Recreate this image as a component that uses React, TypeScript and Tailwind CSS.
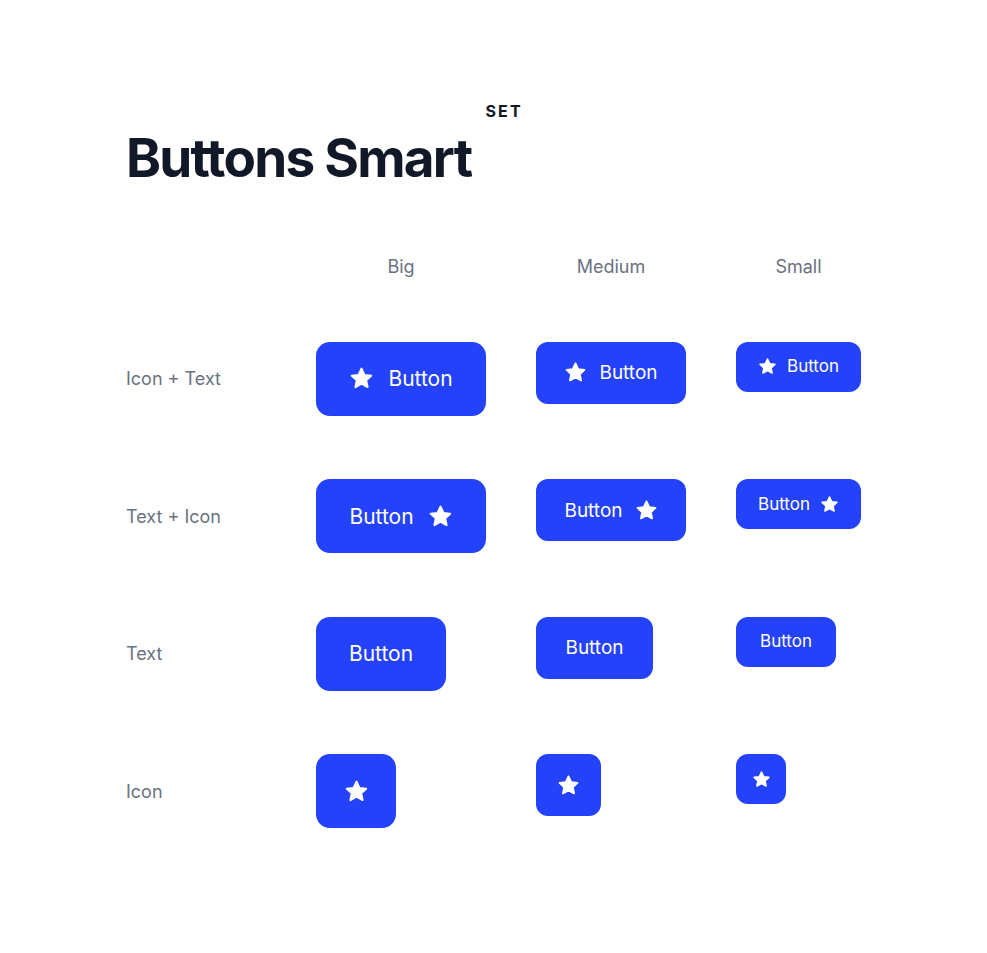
const StarIcon = ({ size }: { size: number }) => (
  <svg
    width={size}
    height={size}
    viewBox="0 0 24 24"
    fill="currentColor"
    stroke="currentColor"
    strokeWidth={2}
    strokeLinejoin="round"
    aria-hidden="true"
  >
    <path d="M12 2.6l2.8 6 6.5.7-4.85 4.45 1.35 6.45L12 17l-5.8 3.2 1.35-6.45L2.7 9.3l6.5-.7z" />
  </svg>
);

type Size = "big" | "medium" | "small";
type Kind = "icon-text" | "text-icon" | "text" | "icon";

const sizes = {
  big: {
    box: "h-[74px] rounded-[14px] text-[21px] gap-[14px]",
    star: 25,
    widths: {
      "icon-text": "w-[170px]",
      "text-icon": "w-[170px]",
      text: "w-[130px]",
      icon: "w-[80px]",
    },
  },
  medium: {
    box: "h-[62px] rounded-[12px] text-[19px] gap-[12px]",
    star: 23,
    widths: {
      "icon-text": "w-[150px]",
      "text-icon": "w-[150px]",
      text: "w-[117px]",
      icon: "w-[65px]",
    },
  },
  small: {
    box: "h-[50px] rounded-[12px] text-[17px] gap-[10px]",
    star: 19,
    widths: {
      "icon-text": "w-[125px]",
      "text-icon": "w-[125px]",
      text: "w-[100px]",
      icon: "w-[50px]",
    },
  },
};

const SmartButton = ({ size, kind }: { size: Size; kind: Kind }) => {
  const s = sizes[size];
  return (
    <button
      className={`${s.box} ${s.widths[kind]} flex items-center justify-center bg-[#2342F9] text-white font-normal leading-none`}
    >
      {kind === "icon-text" && <StarIcon size={s.star} />}
      {kind !== "icon" && <span>Button</span>}
      {(kind === "text-icon" || kind === "icon") && <StarIcon size={s.star} />}
    </button>
  );
};

const rows: { label: string; kind: Kind }[] = [
  { label: "Icon + Text", kind: "icon-text" },
  { label: "Text + Icon", kind: "text-icon" },
  { label: "Text", kind: "text" },
  { label: "Icon", kind: "icon" },
];

export default function App() {
  return (
    <div
      className="min-h-[953px] bg-white pl-[126px] pt-[103px]"
      style={{ fontFamily: "Inter, 'Noto Sans', sans-serif" }}
    >
      <div className="flex items-start">
        <h1 className="mt-[29px] text-[53px] font-bold leading-none tracking-[-0.033em] text-[#111827]">
          Buttons Smart
        </h1>
        <span className="ml-[14px] text-[16px] font-bold leading-none tracking-[0.14em] text-[#111827]">
          SET
        </span>
      </div>

      <div className="mt-[68px] grid grid-cols-[190px_220px_200px_auto] gap-y-[63.5px]">
        <div className="h-[25px]" />
        <div className="h-[25px] w-[170px] text-center text-[18px] leading-[28px] text-[#6b7280]">Big</div>
        <div className="h-[25px] w-[150px] text-center text-[18px] leading-[28px] text-[#6b7280]">Medium</div>
        <div className="h-[25px] w-[125px] text-center text-[18px] leading-[28px] text-[#6b7280]">Small</div>

        {rows.map((row) => (
          <div key={row.kind} className="contents">
            <div className="flex h-[74px] items-center text-[18px] text-[#6b7280]">{row.label}</div>
            <div>
              <SmartButton size="big" kind={row.kind} />
            </div>
            <div>
              <SmartButton size="medium" kind={row.kind} />
            </div>
            <div>
              <SmartButton size="small" kind={row.kind} />
            </div>
          </div>
        ))}
      </div>
    </div>
  );
}
